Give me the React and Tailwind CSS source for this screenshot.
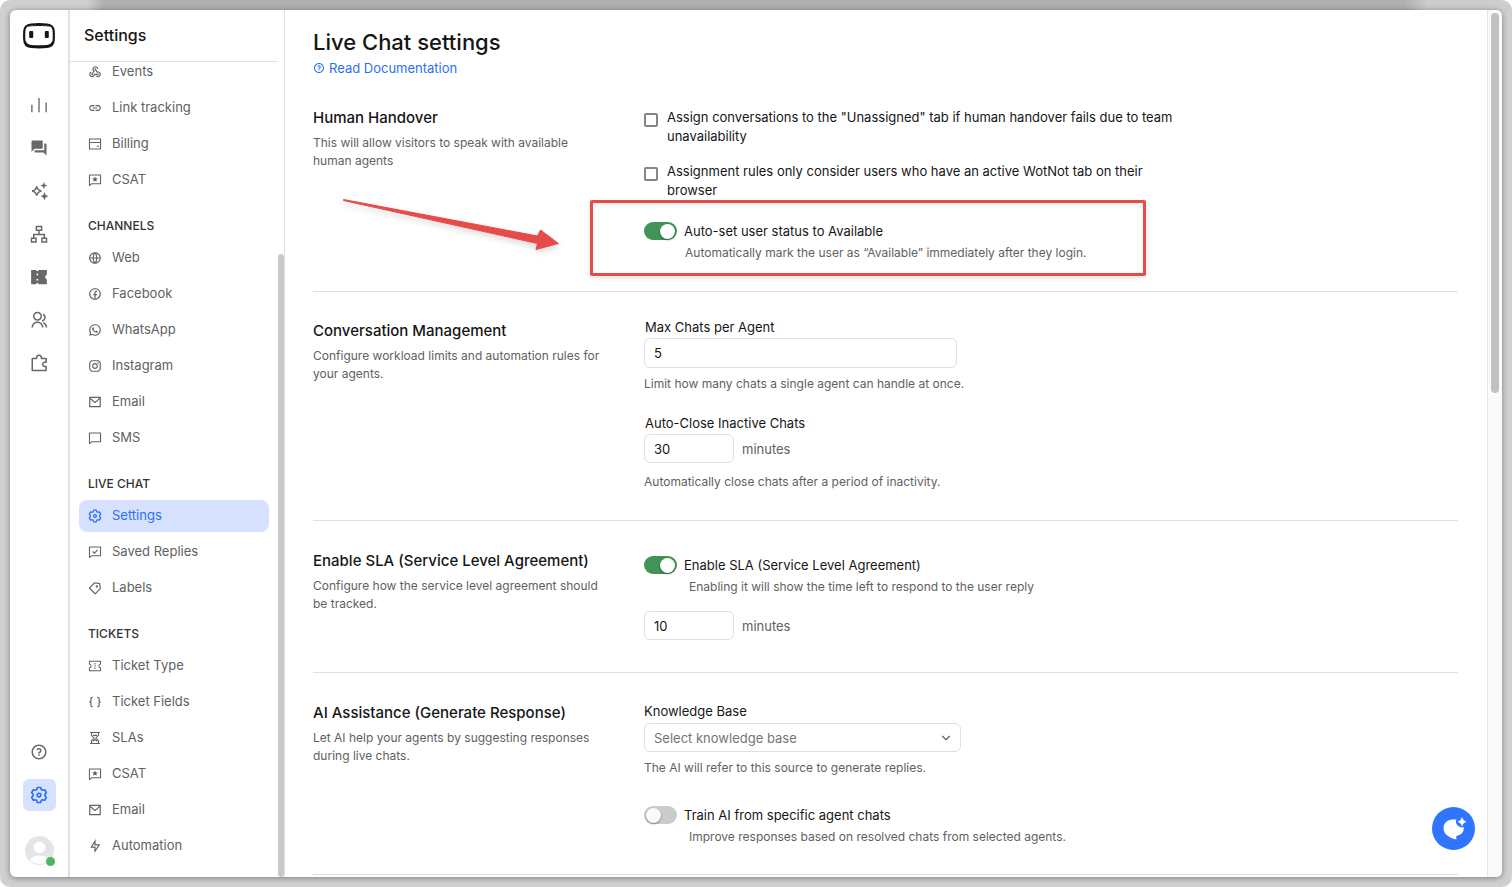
import React from "react";
import {
  RiGroupLine,
  RiWhatsappLine,
  RiInstagramLine,
  RiFacebookCircleLine,
  RiMailLine,
  RiGlobalLine,
  RiBracesLine,
  RiPriceTag3Line,
  RiQuestionLine,
  RiFlashlightLine,
} from "react-icons/ri";
import { MdForum, MdWebhook, MdLink } from "react-icons/md";
import { ChevronDown } from "lucide-react";

function Svg({ className, children, width = 2, box = "0 0 24 24" }) {
  return (
    <svg
      className={className}
      viewBox={box}
      fill="none"
      stroke="currentColor"
      strokeWidth={width}
      aria-hidden="true"
    >
      {children}
    </svg>
  );
}

const Logo = () => (
  <svg className="h-[26px] w-8 text-[#161616]" viewBox="0 0 32 26" fill="none" aria-hidden="true">
    <path
      d="M8 1.500C13 1 19 1 24 1.500C28.500 1.900 30.500 4 30.700 8C30.900 11 30.900 14 30.700 17C30.500 21.500 28.500 23.600 24 24C19 24.400 13 24.400 8 24C3.500 23.600 1.500 21.500 1.300 17C1.100 14 1.100 11 1.300 8C1.500 4 3.500 1.900 8 1.500Z"
      stroke="currentColor"
      strokeWidth="2.200"
    />
    <path d="M2 18.500C3 22 5 22.700 8 22.900C13 23.300 19 23.300 24 22.900C27 22.700 29 22 30 18.500" stroke="currentColor" strokeWidth="2" />
    <path d="M5 3.200C9 2.300 23 2.300 27 3.200" stroke="currentColor" strokeWidth="1" />
    <rect x="6.200" y="8" width="4" height="7" rx="1" fill="currentColor" />
    <rect x="21.800" y="8" width="4" height="7" rx="1" fill="currentColor" />
  </svg>
);

const BarsIcon = ({ className }) => (
  <Svg className={className} width={1.8}>
    <path d="M2.500 11.500V21.500M12 2.500v19M21.500 8.500v13" />
  </Svg>
);

const SparkleIcon = ({ className }) => (
  <Svg className={className} width={2}>
    <path d="M9 5.800C9.800 9.600 11.400 11.200 15.200 12C11.400 12.800 9.800 14.400 9 18.200C8.200 14.400 6.600 12.800 2.800 12C6.600 11.200 8.200 9.600 9 5.800Z" />
    <path
      d="M18.500 .5C19.200 3.300 20 4 22.800 4.700C20 5.400 19.200 6.100 18.500 8.900C17.800 6.100 17 5.400 14.200 4.700C17 4 17.800 3.300 18.500 .5ZM19.300 14C20.200 17.200 21 18 24 18.900C21 19.800 20.200 20.600 19.300 23.800C18.400 20.600 17.600 19.800 14.600 18.900C17.600 18 18.400 17.200 19.300 14Z"
      fill="currentColor"
      stroke="currentColor"
      strokeWidth=".5"
    />
  </Svg>
);

const FlowIcon = ({ className }) => (
  <Svg className={className} width={2}>
    <path d="M8.500 2h7v5h-7ZM2 17.500h6v5H2ZM16 17.500h6v5h-6ZM12 7v5.500M5 17.500v-5h14v5" />
  </Svg>
);

const PuzzleIcon = ({ className }) => (
  <Svg className={className} width={2}>
    <path
      strokeLinejoin="round"
      d="M3 6H8.800C8.200 3.600 9.800 1.800 12 1.800S15.800 3.600 15.200 6H21.500V11C18.800 10.300 16.800 11.700 16.800 13.800S18.800 17.300 21.500 16.600V22H3Z"
    />
  </Svg>
);

const TicketSolidIcon = ({ className }) => (
  <svg className={className} viewBox="0 0 24 24" fill="currentColor" aria-hidden="true">
    <path
      fillRule="evenodd"
      d="M1.500 2.500H8.200A1.600 1.600 0 0 0 11.400 2.500H22.500V9A3.100 3.100 0 0 0 22.500 15V21.500H11.400A1.600 1.600 0 0 0 8.200 21.500H1.500ZM9.800 7.200a1.300 1.300 0 1 0 0 2.600a1.300 1.300 0 1 0 0-2.600ZM9.800 14.200a1.300 1.300 0 1 0 0 2.600a1.300 1.300 0 1 0 0-2.600Z"
    />
  </svg>
);

const GearIcon = ({ className }) => (
  <Svg className={className} width={2.200}>
    <path
      strokeLinejoin="round"
      d="M9.800 2h4.400l.8 2.600 1.700 1 2.900-.6 2.200 3.800-1.900 2.200v2l1.900 2.200-2.200 3.800-2.900-.6-1.700 1-.8 2.600H9.800L9 19.400l-1.700-1-2.900.6-2.200-3.800 1.900-2.200v-2l-1.900-2.200 2.200-3.800 2.900.6 1.700-1Z"
    />
    <circle cx="12" cy="12" r="2.400" />
  </Svg>
);

const CardIcon = ({ className }) => (
  <Svg className={className} width={1.8}>
    <path d="M2.500 3.500h19v17h-19ZM2.500 9.500h19M15 16h4" />
  </Svg>
);

const BubbleIcon = ({ className, children }) => (
  <Svg className={className} width={1.8}>
    <path d="M2.500 3.500h19v15H6l-3.500 3Z" strokeLinejoin="round" />
    {children}
  </Svg>
);

const CsatIcon = ({ className }) => (
  <BubbleIcon className={className}>
    <path
      d="M12 5.800l1.400 3.300 3.500.3-2.700 2.300.9 3.500-3.100-1.900-3.100 1.900.9-3.500-2.700-2.300 3.500-.3Z"
      fill="currentColor"
      stroke="none"
    />
  </BubbleIcon>
);

const CheckBubbleIcon = ({ className }) => (
  <BubbleIcon className={className}>
    <path d="M8 11l3 3 5.500-5.500" />
  </BubbleIcon>
);

const TicketIcon = ({ className }) => (
  <Svg className={className} width={1.800}>
    <path
      strokeLinejoin="round"
      d="M2.500 4h19v4.500a3.600 3.600 0 0 0 0 7V20h-19v-4.500a3.600 3.600 0 0 0 0-7Z"
    />
    <path d="M12 7v2.400M12 10.800v2.400M12 14.600V17" />
  </Svg>
);

const HourglassIcon = ({ className }) => (
  <Svg className={className} width={1.800}>
    <path d="M3.500 2.500h17M3.500 21.500h17M6 3v4.500L10.500 12L6 16.500V21M18 3v4.500L13.500 12L18 16.500V21M8 17.500L12 14.500l4 3M8.500 7.500h7" />
  </Svg>
);

const ChatSparkIcon = ({ className }) => (
  <svg className={className} viewBox="0 0 24 24" fill="currentColor" aria-hidden="true">
    <path d="M10.500 2.500H14.500C13.500 4 13.800 6.300 15.200 8C16.800 10 19.300 10.700 21.800 10.200C22.200 14.500 19.500 18 14.300 19V22.500C10 21.600 1.500 18.500 1.500 11.200C1.500 6 5.500 2.500 10.500 2.500Z" />
    <path d="M20 .5C20.900 3.200 21.500 3.800 24 4.700C21.500 5.600 20.900 6.200 20 8.900C19.100 6.200 18.500 5.600 16 4.700C18.500 3.800 19.100 3.200 20 .5Z" stroke="currentColor" strokeWidth=".6" />
  </svg>
);

const railItems = [
  { label: "Analytics", Icon: BarsIcon },
  { label: "Conversations", Icon: MdForum },
  { label: "AI Studio", Icon: SparkleIcon },
  { label: "Flows", Icon: FlowIcon },
  { label: "Tickets", Icon: TicketSolidIcon },
  { label: "Contacts", Icon: RiGroupLine },
  { label: "Integrations", Icon: PuzzleIcon },
];

const navGroups = [
  {
    items: [
      { label: "Events", Icon: MdWebhook },
      { label: "Link tracking", Icon: MdLink },
      { label: "Billing", Icon: CardIcon },
      { label: "CSAT", Icon: CsatIcon },
    ],
  },
  {
    title: "CHANNELS",
    items: [
      { label: "Web", Icon: RiGlobalLine },
      { label: "Facebook", Icon: RiFacebookCircleLine },
      { label: "WhatsApp", Icon: RiWhatsappLine },
      { label: "Instagram", Icon: RiInstagramLine },
      { label: "Email", Icon: RiMailLine },
      { label: "SMS", Icon: BubbleIcon },
    ],
  },
  {
    title: "LIVE CHAT",
    items: [
      { label: "Settings", Icon: GearIcon, active: true },
      { label: "Saved Replies", Icon: CheckBubbleIcon },
      { label: "Labels", Icon: RiPriceTag3Line },
    ],
  },
  {
    title: "TICKETS",
    items: [
      { label: "Ticket Type", Icon: TicketIcon },
      { label: "Ticket Fields", Icon: RiBracesLine },
      { label: "SLAs", Icon: HourglassIcon },
      { label: "CSAT", Icon: CsatIcon },
      { label: "Email", Icon: RiMailLine },
      { label: "Automation", Icon: RiFlashlightLine },
    ],
  },
];

function Rail() {
  return (
    <nav
      aria-label="Main"
      className="flex w-[60px] shrink-0 flex-col items-center border-r-2 border-[#e0e0e0] pt-[13px] pb-3 text-[#686868]"
    >
      <a href="#home" aria-label="Home">
        <Logo />
      </a>
      <div className="mt-10 flex flex-col gap-[11px]">
        {railItems.map(({ label, Icon }) => (
          <button key={label} aria-label={label} className="flex size-8 items-center justify-center">
            <Icon className="size-[18px]" />
          </button>
        ))}
      </div>
      <div className="mt-auto flex flex-col items-center gap-[11px]">
        <button aria-label="Help" className="flex size-8 items-center justify-center">
          <RiQuestionLine className="size-[18px]" />
        </button>
        <button
          aria-label="Settings"
          className="flex h-8 w-[33px] items-center justify-center rounded-md bg-[#d6e1ff] text-[#2e6ff2]"
        >
          <GearIcon className="size-[18px]" />
        </button>
      </div>
      <button aria-label="Profile" className="relative mt-[25px]">
        <svg className="size-[29px]" viewBox="0 0 29 29" aria-hidden="true">
          <circle cx="14.500" cy="14.500" r="14.500" fill="#e4e5e9" />
          <circle cx="14.500" cy="11.500" r="5.800" fill="#fff" />
          <path d="M5 24C7 20.500 10.500 19.500 14.500 19.500S22 20.500 24 24C21.500 27 18 28 14.500 28S7.500 27 5 24Z" fill="#fff" />
        </svg>
        <span className="absolute -right-px -bottom-px size-[9px] rounded-full bg-[#50b465]" />
      </button>
    </nav>
  );
}

function Sidebar() {
  return (
    <aside className="flex w-[215px] shrink-0 border-r border-[#e0e0e0]">
      <div className="flex min-w-0 flex-1 flex-col">
        <h2 className="flex h-[52px] shrink-0 items-center border-b border-[#e0e0e0] pb-px pl-3.5 text-base leading-5 font-medium text-[#161616]">
          Settings
        </h2>
        <nav aria-label="Settings" className="min-h-0 flex-1 overflow-hidden pr-[9px] pl-[9px]">
          <div className="-mt-1.5">
            {navGroups.map((group, i) => (
              <section key={i}>
                {group.title && (
                  <h3 className="mt-[22px] mb-2 pl-[9px] text-xs leading-4 font-medium text-[#333333]">
                    {group.title}
                  </h3>
                )}
                <ul className="flex flex-col gap-1">
                  {group.items.map(({ label, Icon, active }) => (
                    <li key={label}>
                      <a
                        href="#section"
                        aria-current={active ? "page" : undefined}
                        className={
                          active
                            ? "flex h-8 items-center gap-2.5 rounded-lg bg-[#d6e1ff] pl-[9px] text-[13px] leading-5 text-[#2e6ff2]"
                            : "flex h-8 items-center gap-2.5 rounded-lg pl-[9px] text-[13px] leading-5 text-[#616161]"
                        }
                      >
                        <Icon className="size-3.5 shrink-0" />
                        <span className="pb-0.5">{label}</span>
                      </a>
                    </li>
                  ))}
                </ul>
              </section>
            ))}
          </div>
        </nav>
      </div>
      <div className="flex w-1.5 pt-[244px]" aria-hidden="true">
        <div className="w-full rounded-full bg-[#c9c9c9]" />
      </div>
    </aside>
  );
}

function Section({ title, text, className, children }) {
  return (
    <section className="grid grid-cols-[294px_minmax(0,1fr)] gap-[37px] border-b border-[#e0e0e0]">
      <div className={className}>
        <h2 className="text-[15px] leading-5 font-medium text-[#161616]">{title}</h2>
        <p className="mt-1.5 text-xs leading-[18px] text-[#616161]">{text}</p>
      </div>
      {children}
    </section>
  );
}

function Help({ className, id, children }) {
  return (
    <p id={id} className={`text-xs leading-[18px] text-[#616161] ${className}`}>
      {children}
    </p>
  );
}

function Check({ children }) {
  return (
    <label className="flex gap-[9px] text-[13px] leading-[19px] text-[#161616]">
      <input
        type="checkbox"
        className="mt-[5px] size-3.5 shrink-0 appearance-none rounded-xs border-2 border-[#858585] checked:bg-[#2e6ff2]"
      />
      <span>{children}</span>
    </label>
  );
}

function Toggle({ on, children }) {
  return (
    <label className="flex items-center gap-[7px] text-[13px] leading-5 text-[#161616]">
      <input
        type="checkbox"
        role="switch"
        defaultChecked={on}
        className="flex h-[18px] w-[33px] shrink-0 appearance-none items-center rounded-full bg-[#cbcbcb] pl-0.5 before:size-[15px] before:rounded-full before:bg-[#fafafa] before:shadow-[0_1px_2px_rgba(0,0,0,0.4)] checked:bg-[#429357] checked:pl-4 checked:before:bg-white"
      />
      {children}
    </label>
  );
}

function Minutes({ id, value, label }) {
  return (
    <div className="flex items-center gap-2 text-[13px] leading-5 text-[#616161]">
      <input
        id={id}
        aria-label={label}
        defaultValue={value}
        className="h-[29px] w-[90px] rounded-md border border-[#e0e0e0] px-[9px] text-[#161616]"
      />
      <span>minutes</span>
    </div>
  );
}

function Arrow() {
  return (
    <svg
      className="pointer-events-none absolute -top-[26px] -left-[304px] h-[60px] w-[222px] drop-shadow-[0_3px_3px_rgba(0,0,0,0.15)]"
      viewBox="0 0 222 60"
      fill="#e64b49"
      stroke="#e64b49"
      strokeLinejoin="round"
      aria-hidden="true"
    >
      <path d="M3.500 4.500L197.500 41L200.500 35L218.500 48.500L196 54.500L197.500 48.500L3.500 5.500Z" />
    </svg>
  );
}

function Content() {
  return (
    <main className="min-w-0 flex-1 overflow-hidden pt-[18px] pr-[29px] pl-7">
      <h1 className="text-[22px] leading-7 font-medium text-[#161616]">Live Chat settings</h1>
      <a href="#docs" className="mt-0.5 flex items-center gap-1 text-[13px] leading-5 text-[#2e6ff2]">
        <RiQuestionLine className="size-3" />
        Read Documentation
      </a>

      <div className="mt-[30px]">
        <Section
          title="Human Handover"
          text="This will allow visitors to speak with available human agents"
        >
          <div className="max-w-[534px] pb-[29px]">
            <div className="flex flex-col gap-4">
              <Check>
                Assign conversations to the "Unassigned" tab if human handover fails due to team unavailability
              </Check>
              <Check>
                Assignment rules only consider users who have an active WotNot tab on their browser
              </Check>
            </div>
            <div className="relative mt-[21px]">
              <Toggle on>Auto-set user status to Available</Toggle>
              <Help className="mt-[3px] pl-[41px]">
                Automatically mark the user as “Available” immediately after they login.
              </Help>
              <div className="pointer-events-none absolute -top-[21px] right-8 -bottom-[14px] -left-[54px] rounded-xs border-3 border-[#e64b49] shadow-[0_2px_5px_rgba(0,0,0,0.12),inset_0_2px_5px_rgba(0,0,0,0.08)]" />
              <Arrow />
            </div>
          </div>
        </Section>

        <Section
          className="pt-[29px]"
          title="Conversation Management"
          text="Configure workload limits and automation rules for your agents."
        >
          <div className="pt-[25px] pb-[29px] text-[13px] leading-5 text-[#161616]">
            <label htmlFor="max-chats" className="block pl-px">
              Max Chats per Agent
            </label>
            <input
              id="max-chats"
              defaultValue="5"
              className="mt-px block h-[30px] w-full max-w-[313px] rounded-md border border-[#e0e0e0] px-[9px]"
            />
            <Help className="mt-[7px]">Limit how many chats a single agent can handle at once.</Help>
            <label htmlFor="auto-close" className="mt-5 mb-px block pl-px">
              Auto-Close Inactive Chats
            </label>
            <Minutes id="auto-close" value="30" />
            <Help className="mt-2.5">Automatically close chats after a period of inactivity.</Help>
          </div>
        </Section>

        <Section
          className="pt-[30px]"
          title="Enable SLA (Service Level Agreement)"
          text="Configure how the service level agreement should be tracked."
        >
          <div className="pt-[34px] pb-8">
            <Toggle on>Enable SLA (Service Level Agreement)</Toggle>
            <Help className="mt-[3px] mb-[15px] pl-[45px]">
              Enabling it will show the time left to respond to the user reply
            </Help>
            <Minutes id="sla" value="10" label="SLA minutes" />
          </div>
        </Section>

        <Section
          className="pt-[30px]"
          title="AI Assistance (Generate Response)"
          text="Let AI help your agents by suggesting responses during live chats."
        >
          <div className="pt-7 pb-7 text-[13px] leading-5 text-[#161616]">
            <label htmlFor="knowledge" className="block">
              Knowledge Base
            </label>
            <div className="relative mt-0.5 max-w-[317px]">
              <select
                id="knowledge"
                className="block h-[29px] w-full appearance-none rounded-md border border-[#e0e0e0] bg-white pr-8 pl-[9px] text-[#757575]"
              >
                <option>Select knowledge base</option>
              </select>
              <ChevronDown className="pointer-events-none absolute top-2 right-2 size-3.5 text-[#616161]" />
            </div>
            <Help className="mt-[7px] mb-7">The AI will refer to this source to generate replies.</Help>
            <Toggle>Train AI from specific agent chats</Toggle>
            <Help className="mt-[3px] pl-[45px]">
              Improve responses based on resolved chats from selected agents.
            </Help>
          </div>
        </Section>
      </div>
    </main>
  );
}

export default function App() {
  return (
    <div className="h-screen overflow-hidden rounded-[10px] bg-[#d0d0d0] bg-[linear-gradient(90deg,#cfcfcf_88px,#b0b0b0_104px,#b0b0b0_calc(100%-108px),#cdcdcd_calc(100%-84px))] bg-[length:100%_10px] bg-no-repeat p-2.5 font-['Inter',sans-serif]">
      <div className="relative flex h-full overflow-hidden rounded-md bg-white shadow-[0_1px_6px_rgba(0,0,0,0.4)]">
        <Rail />
        <Sidebar />
        <Content />
        <div className="w-[15px] shrink-0 border-l border-[#e5e5e5] bg-[#fafafa] px-[3px] pt-[3px]" aria-hidden="true">
          <div className="h-[44%] w-2 rounded-full bg-[#c1c1c1]" />
        </div>
        <button
          aria-label="Open chat"
          className="absolute right-[27px] bottom-[27px] flex size-[43px] items-center justify-center rounded-full bg-[#3075ff] text-white"
        >
          <ChatSparkIcon className="size-6" />
        </button>
      </div>
    </div>
  );
}
